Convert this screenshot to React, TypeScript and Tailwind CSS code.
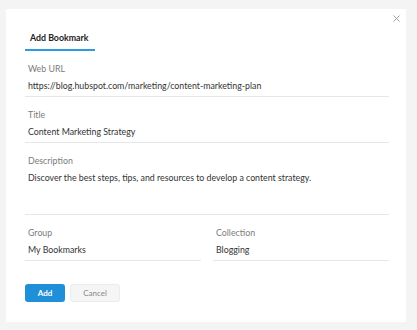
import React from 'react';

function Field({ label, value, className = '', valueClass = 'pb-[4px]' }: { label: string; value: string; className?: string; valueClass?: string }) {
  return (
    <div className={className}>
      <div className="mt-[12px] px-[3px] text-[8.8px] leading-[12px] text-[#7b7b7b]">{label}</div>
      <div className={`mt-[5px] border-b border-[#e6e6e6] px-[3px] text-[8.8px] leading-[12px] text-[#333] ${valueClass}`}>
        {value}
      </div>
    </div>
  );
}

export default function App() {
  return (
    <div className="h-[330px] w-[417px] bg-[#f4f4f4] pt-[9px] pl-[6px] font-['Lato','Liberation_Sans',sans-serif]">
      <div className="relative h-[313px] w-[400px] bg-white pt-[23px] pl-[19px] pr-[17px] pb-[19px]">
        <button className="absolute right-[3px] top-[2px] flex h-[14px] w-[14px] items-center justify-center text-[#a0a0a0]">
          <svg width="7" height="7" viewBox="0 0 7 7" fill="none" stroke="currentColor" strokeWidth="1">
            <path d="M0.5 0.5 L6.5 6.5 M6.5 0.5 L0.5 6.5" />
          </svg>
        </button>

        <div className="w-fit border-b-2 border-[#2d9be3] pl-[5px] pr-[6px] pb-[5px] text-[8.8px] font-bold leading-[12px] text-[#222]">
          Add Bookmark
        </div>

        <Field label="Web URL" value="https://blog.hubspot.com/marketing/content-marketing-plan" className="mt-[1px]" />
        <Field label="Title" value="Content Marketing Strategy" />
        <Field label="Description" value="Discover the best steps, tips, and resources to develop a content strategy." valueClass="pb-[30px]" />

        <div className="grid grid-cols-2 gap-x-[12px]">
          <Field label="Group" value="My Bookmarks" />
          <Field label="Collection" value="Blogging" />
        </div>

        <div className="mt-[23px] flex gap-[5px]">
          <button className="h-[18px] w-[40px] rounded-[3px] bg-[#1f8fd8] text-[8px] font-bold text-white">Add</button>
          <button className="h-[18px] w-[50px] rounded-[3px] border border-[#ececec] bg-[#f5f5f5] text-[8px] text-[#888]">Cancel</button>
        </div>
      </div>
    </div>
  );
}
